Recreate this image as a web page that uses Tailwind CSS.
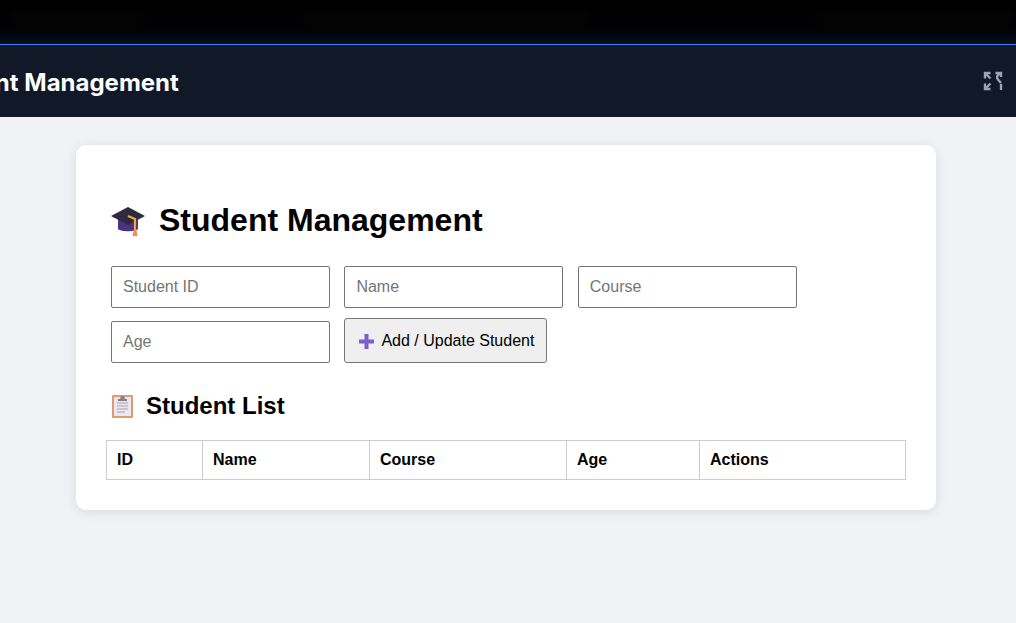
<!DOCTYPE html>
<html lang="en">
<head>
    <meta charset="UTF-8">
    <meta name="viewport" content="width=device-width, initial-scale=1.0">
    <title>Student Management</title>
    <script src="https://cdn.jsdelivr.net/npm/@tailwindcss/browser@4"></script>
</head>
<body class="bg-[#f0f2f5] min-h-screen overflow-hidden font-['Liberation_Sans',Arial,sans-serif]">
    <!-- blurred strip above the app bar -->
    <div class="relative h-[44px] overflow-hidden bg-gradient-to-b from-black from-35% to-[#07111f]">
        <div class="absolute left-[10px] top-[15px] h-[10px] w-[135px] bg-white/[0.025] blur-[6px]"></div>
        <div class="absolute left-[300px] top-[15px] h-[10px] w-[290px] bg-white/[0.025] blur-[6px]"></div>
        <div class="absolute left-[815px] top-[15px] h-[10px] w-[200px] bg-white/[0.025] blur-[6px]"></div>
    </div>

    <header class="h-[73px] bg-[#111827] border-t border-[#3b82f6] flex items-center justify-between pr-[13px] overflow-hidden">
        <h1 class="ml-[-74px] mt-[3px] text-2xl font-bold text-white whitespace-nowrap font-['Inter',sans-serif]">Student Management</h1>
        <svg class="w-[20px] h-[20px] text-[#9ca3af]" viewBox="0 0 20 20" fill="none" stroke="currentColor" stroke-width="2.4">
            <path d="M2 7.500V2h5.500M2 2l5.500 5.500"/>
            <path d="M12.500 2H18v4M18 2c-4 2-5 4-3 6.500l3 3.500"/>
            <path d="M2 12.500V18h5.500M2 18l5.500-5.500"/>
            <path d="M18 13v6"/>
        </svg>
    </header>

    <main class="pt-[28px] pl-[76px] pr-[80px]">
        <div class="bg-white rounded-[10px] shadow-[0_2px_12px_rgba(0,0,0,0.1)] h-[365px] pt-[56px] px-[30px]">
            <h2 class="flex items-center gap-[14px] pl-[5px] h-[38px] text-[32px] font-bold text-black">
                <svg class="w-[34px] h-[34px]" viewBox="0 0 34 34">
                    <path d="M7 12v14c3 3 17 3 20 0V12z" fill="#4a3380"/>
                    <path d="M17 4 34 13 17 22 0 13z" fill="#2f2a3f"/>
                    <path d="M17 13l7 3v12" fill="none" stroke="#f0a63c" stroke-width="2.200"/>
                    <path d="M22.500 27h3l1 6h-5z" fill="#f58b5c"/>
                </svg>
                Student Management
            </h2>

            <div class="mt-[24px] pl-[5px] flex flex-col gap-[10px]">
                <div class="flex gap-[14.4px]">
                    <input class="w-[219px] h-[42px] px-[11px] mt-[3px] text-base border border-[#767676] rounded-[2px] placeholder:text-[#757575]" placeholder="Student ID">
                    <input class="w-[219px] h-[42px] px-[11px] mt-[3px] text-base border border-[#767676] rounded-[2px] placeholder:text-[#757575]" placeholder="Name">
                    <input class="w-[219px] h-[42px] px-[11px] mt-[3px] text-base border border-[#767676] rounded-[2px] placeholder:text-[#757575]" placeholder="Course">
                </div>
                <div class="flex items-end gap-[14.4px]">
                    <input class="w-[219px] h-[42px] px-[11px] text-base border border-[#767676] rounded-[2px] placeholder:text-[#757575]" placeholder="Age">
                    <button class="h-[45px] w-[203px] flex items-center justify-center gap-[6px] pl-[1px] pt-[1px] bg-[#efefef] border border-[#767676] rounded-[3px] text-base text-black">
                        <svg class="w-[17px] h-[17px]" viewBox="0 0 17 17"><path d="M6.500 1h4v5.500H16v4h-5.500V16h-4v-5.500H1v-4h5.500z" fill="#7b5fd0"/></svg>
                        Add / Update Student
                    </button>
                </div>
            </div>

            <h3 class="mt-[28px] pl-[5px] h-[30px] flex items-center gap-[12px] text-2xl font-bold text-black">
                <svg class="w-[23px] h-[24px]" viewBox="0 0 23 24">
                    <rect x="1" y="1" width="21" height="23" rx="1" fill="#e39a6c"/>
                    <rect x="3" y="3" width="17" height="19" fill="#ece6f2"/>
                    <path d="M6 9h11M6 12h11M6 15h11M6 18h8" stroke="#a9a3b5" stroke-width="1"/>
                    <path d="M7 5h2l1-3h3l1 3h2v2H7z" fill="#857f8c"/>
                </svg>
                Student List
            </h3>

            <table class="mt-[19px] w-[800px] table-fixed border-collapse text-base text-black">
                <thead>
                    <tr class="h-[39px]">
                        <th class="w-[96px] px-[10px] pb-[1px] text-left font-bold border border-[#cccccc]">ID</th>
                        <th class="w-[167px] px-[10px] pb-[1px] text-left font-bold border border-[#cccccc]">Name</th>
                        <th class="w-[197px] px-[10px] pb-[1px] text-left font-bold border border-[#cccccc]">Course</th>
                        <th class="w-[133px] px-[10px] pb-[1px] text-left font-bold border border-[#cccccc]">Age</th>
                        <th class="px-[10px] pb-[1px] text-left font-bold border border-[#cccccc]">Actions</th>
                    </tr>
                </thead>
                <tbody></tbody>
            </table>
        </div>
    </main>
</body>
</html>
